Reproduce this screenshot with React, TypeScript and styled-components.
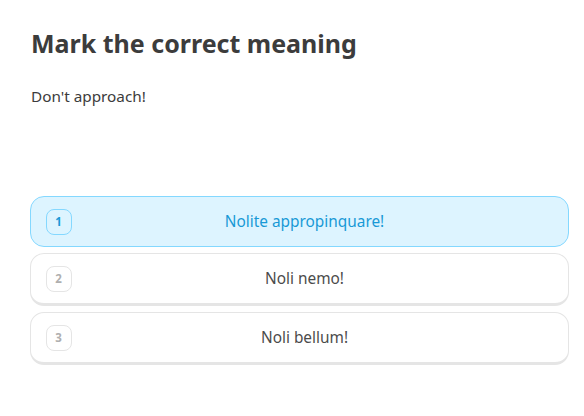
import React from "react";
import styled, { createGlobalStyle } from "styled-components";

const Global = createGlobalStyle`
  html, body { margin: 0; padding: 0; background: #fff; }
  body { font-family: "Noto Sans", "DejaVu Sans", sans-serif; }
`;

const Page = styled.div`
  width: 584px;
  height: 416px;
  box-sizing: border-box;
  padding: 26px 15px 0 30px;
  display: flex;
  flex-direction: column;
`;

const Title = styled.h1`
  margin: 0 0 0 1px;
  font-size: 25px;
  line-height: 34px;
  font-weight: 700;
  color: #3c3c3c;
`;

const Prompt = styled.div`
  margin: 26px 0 0 1px;
  font-size: 15.3px;
  line-height: 20px;
  color: #3c3c3c;
`;

const Options = styled.div`
  margin-top: 88px;
  display: flex;
  flex-direction: column;
  gap: 6px;
`;

const Option = styled.div<{ $selected?: boolean }>`
  box-sizing: border-box;
  height: ${(p) => (p.$selected ? "51px" : "53px")};
  margin-top: ${(p) => (p.$selected ? "2px" : "0")};
  border: 1.5px solid ${(p) => (p.$selected ? "#84d8ff" : "#e5e5e5")};
  border-bottom-width: ${(p) => (p.$selected ? "1.5px" : "3.5px")};
  border-radius: 14px;
  background: ${(p) => (p.$selected ? "#ddf4ff" : "#fff")};
  display: flex;
  align-items: center;
  padding: 0 14.5px;
`;

const Badge = styled.div<{ $selected?: boolean }>`
  box-sizing: border-box;
  width: 26px;
  height: 26px;
  border: 1.5px solid ${(p) => (p.$selected ? "#84d8ff" : "#e5e5e5")};
  border-radius: 8px;
  display: flex;
  align-items: center;
  justify-content: center;
  font-size: 11.5px;
  font-weight: 700;
  color: ${(p) => (p.$selected ? "#1899d6" : "#afafaf")};
  flex: none;
`;

const Label = styled.div<{ $selected?: boolean }>`
  flex: 1;
  text-align: center;
  font-size: 15.4px;
  color: ${(p) => (p.$selected ? "#1899d6" : "#4b4b4b")};
  margin-right: 16px;
`;

const options = ["Nolite appropinquare!", "Noli nemo!", "Noli bellum!"];

export default function App() {
  return (
    <>
      <Global />
      <Page>
        <Title>Mark the correct meaning</Title>
        <Prompt>Don't approach!</Prompt>
        <Options>
          {options.map((o, i) => (
            <Option key={o} $selected={i === 0}>
              <Badge $selected={i === 0}>{i + 1}</Badge>
              <Label $selected={i === 0}>{o}</Label>
            </Option>
          ))}
        </Options>
      </Page>
    </>
  );
}
